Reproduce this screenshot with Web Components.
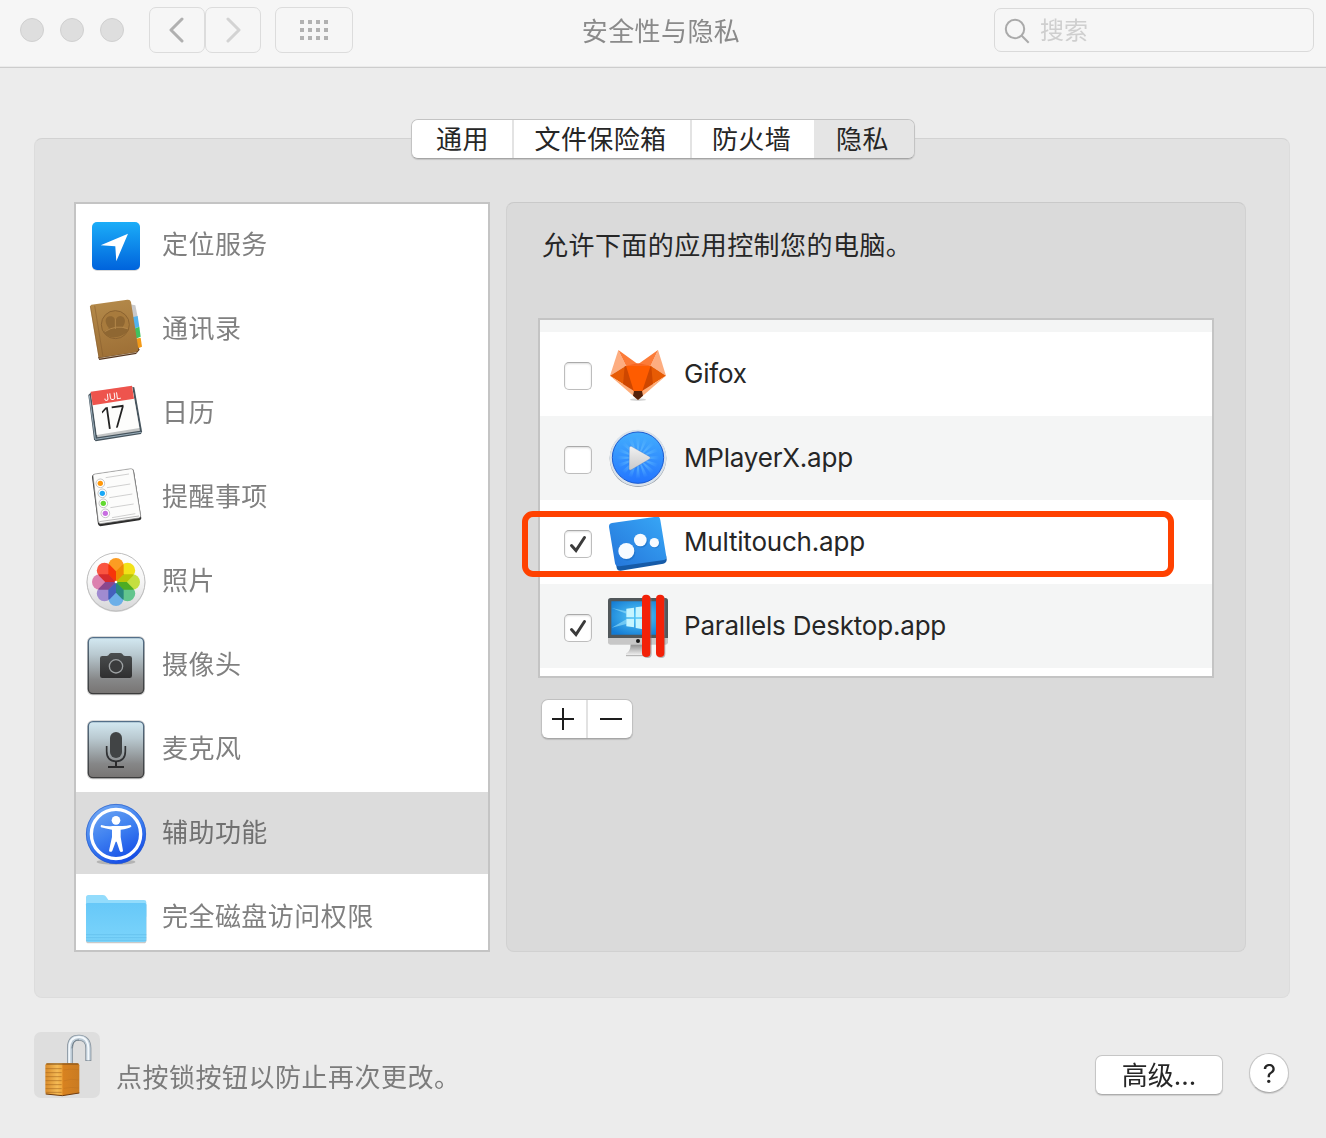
<!DOCTYPE html>
<html lang="zh-CN">
<head>
<meta charset="utf-8">
<title>安全性与隐私</title>
<style>
html,body{margin:0;padding:0}
body{width:1326px;height:1138px;overflow:hidden;background:#ececec;color:#262626;
font:26px/36px Inter,"Noto Sans CJK SC",sans-serif}
</style>
</head>
<body>
<prefs-window></prefs-window>
<script>
const S='scale(.33333)';
const at=(x,y,body)=>`<g transform="translate(${x},${y}) ${S}">${body}</g>`;
const glass=`<defs><linearGradient id="m" x1="0" y1="0" x2="0" y2="1"><stop offset="0" stop-color="#d3e9f2"/><stop offset=".3" stop-color="#b9c9d0"/><stop offset=".75" stop-color="#868788"/><stop offset="1" stop-color="#777473"/></linearGradient><linearGradient id="e" x1="0" y1="0" x2="0" y2="1"><stop offset="0" stop-color="#536f89"/><stop offset=".4" stop-color="#4c5760"/><stop offset="1" stop-color="#3c3c3c"/></linearGradient><linearGradient id="d" x1="0" y1="0" x2="0" y2="1"><stop offset="0" stop-color="#4b4e4f"/><stop offset="1" stop-color="#2f2f30"/></linearGradient></defs>`;
const plate=y=>`<rect x="51" y="${y-3}" width="174" height="177" rx="17" fill="#9a9a9a" opacity=".5"/><rect x="55" y="${y+1}" width="166" height="168" rx="14" fill="url(#m)" stroke="url(#e)" stroke-width="4"/>`;
const petals=['#fc9c22','#f2e218','#c5df3f','#63c58d','#6cafe8','#a08bd0','#dc81ae','#fa5540'];
const icons={
location:`<defs><linearGradient id="a" x1="0" y1="0" x2="0" y2="1"><stop offset="0" stop-color="#1badf8"/><stop offset="1" stop-color="#0063dc"/></linearGradient></defs><rect x="8" y="9" width="48" height="48" rx="5" fill="#000" opacity=".15"/><rect x="8" y="8" width="48" height="48" rx="5" fill="url(#a)"/><path d="M44 19.7 16.7 31.3 31.3 32.3 32.3 47.3Z" fill="#fff"/>`,
contacts:at(-14,-98,`<defs><linearGradient id="a" x1="0" y1="0" x2=".2" y2="1"><stop offset="0" stop-color="#b58b4b"/><stop offset="1" stop-color="#9f7137"/></linearGradient></defs>
<path d="M176 312 196 316 203 350 190 356Z" fill="#c9c9cb"/><path d="M187 352 203 348 208 380 192 386Z" fill="#52b3ee"/><path d="M192 386 208 380 212 410 197 416Z" fill="#40c25e"/><path d="M197 416 212 413 216 440 200 446Z" fill="#f39a18"/>
<path d="M84 472 88 480 198 462 209 449 203 440Z" fill="#51321c"/><path d="M88 475 200 457" stroke="#e8d7b8" stroke-width="2"/>
<path d="M64 314 172 299Q181 298 183 306L205 446Q206 454 198 456L86 473 60 319Z" fill="url(#a)"/><path d="M61 319 87 472M74 317 99 470" stroke="#80572a" stroke-width="2" opacity=".7"/>
<circle cx="136" cy="374" r="42" fill="#a87b3d" stroke="#8b6230" stroke-width="3"/><path d="M100 397C101 389 119 392 116 383C104 370 103 351 119 349C130 347 136 356 136 365C138 350 148 344 158 350C168 356 166 370 159 379C155 387 171 384 175 390C163 411 118 424 100 397Z" fill="#8f6732"/><path d="M104 395Q139 373 173 386M136 358V387" fill="none" stroke="#b3874a" stroke-width="3"/>`),
calendar:at(-14,-182,`<path d="M55 585 62 578 183 560 193 562 216 694 213 702 77 724 72 718Z" fill="#46545d"/><path d="M58 586 76 718 213 697" fill="none" stroke="#9cb0bd" stroke-width="3"/><path d="M62 577 186 558 210 692 82 712Z" fill="#c2c4c4"/><path d="M63 577 186 558 208 684 80 705Z" fill="#fdfdfc"/><path d="M62 575 186 557 192 596 68 616Z" fill="#ee544d"/>
<text transform="translate(103 603) rotate(-8)" font-family="Inter,sans-serif" font-size="28" fill="#fff" textLength="52" lengthAdjust="spacingAndGlyphs">JUL</text><text transform="translate(99 689) rotate(-8)" font-family="Inter,sans-serif" font-weight="300" font-size="90" fill="#222" textLength="75" lengthAdjust="spacingAndGlyphs">17</text>`),
reminders:at(-14,-16,`<path d="M66 80Q67 74 73 73L184 57Q191 57 192 64L214 205Q214 210 208 211L91 229Q86 228 84 222Z" fill="#2d2d2d"/><path d="M69 77Q69 73 75 72L183 56Q189 56 190 62L212 197Q212 203 206 204L92 221Q87 221 85 215Z" fill="#fcfcfb" stroke="#8b8b8b" stroke-width="2"/><path d="M88 215 207 198" stroke="#bbb" stroke-width="3"/>
<g stroke="#bababa" stroke-width="2"><path d="m107 83 70-11M111 113l70-11M118 143l69-11M126 203l70-12"/><path d="m121 173 70-11"/></g><g fill="#fff" stroke="#aaa" stroke-width="2"><circle cx="91" cy="100" r="13"/><circle cx="97" cy="130" r="13"/><circle cx="100" cy="160" r="13"/><circle cx="106" cy="190" r="13"/></g><circle cx="91" cy="100" r="8" fill="#ff9709"/><circle cx="97" cy="130" r="8" fill="#19a8f7"/><circle cx="100" cy="160" r="8" fill="#63d931"/><circle cx="106" cy="190" r="8" fill="#c86ee0"/>`),
photos:at(-14,-100,`<defs><linearGradient id="a" x1="0" y1="0" x2="0" y2="1"><stop offset="0" stop-color="#fff"/><stop offset=".5" stop-color="#f5f5f5"/><stop offset="1" stop-color="#d6d6d8"/></linearGradient></defs><circle cx="138" cy="398" r="88" fill="#aaa" opacity=".5"/><circle cx="138" cy="396" r="87" fill="url(#a)" stroke="#bfbfbf" stroke-width="3"/>
<g transform="translate(138 396)" style="isolation:isolate">${petals.map((c,i)=>`<path d="M0 0-23-23V-49A23 23 0 0 1 23-49V-23Z" fill="${c}" transform="rotate(${i*45})" style="mix-blend-mode:multiply"/>`).join('')}</g><circle cx="138" cy="396" r="4" fill="#fff"/>`),
camera:glass+at(-14,-184,plate(562)+`<path d="M90 625Q90 618 97 618H110Q115 618 118 612Q120 609 125 609H150Q155 609 157 612Q160 618 165 618H179Q186 618 186 625V677Q186 684 179 684H97Q90 684 90 677Z" fill="url(#d)"/><circle cx="138" cy="649" r="20" fill="#3a3b3c" stroke="#9ca0a2" stroke-width="4"/>`),
mic:glass+at(-14,-18,plate(64)+`<rect x="120" y="96" width="36" height="78" rx="18" fill="#414445"/><path d="M110 138V154C110 175 122 184 138 184S166 175 166 154V138" fill="none" stroke="#303234" stroke-width="5"/><path d="M138 184V200M114 201H162" stroke="#2a2a2b" stroke-width="6"/>`),
access:at(-14,-102,`<defs><linearGradient id="a" x1=".2" y1="0" x2=".7" y2="1"><stop offset="0" stop-color="#72a9f3"/><stop offset=".5" stop-color="#3d7ff0"/><stop offset="1" stop-color="#1248e6"/></linearGradient></defs><ellipse cx="138" cy="486" rx="58" ry="8" fill="#666" opacity=".35"/><circle cx="138" cy="402" r="90" fill="url(#a)"/><circle cx="138" cy="402" r="89" fill="none" stroke="#285bc6" stroke-width="2"/><circle cx="138" cy="402" r="74" fill="none" stroke="#fff" stroke-width="10"/><circle cx="138" cy="361" r="13" fill="#fff"/><path d="M94 375Q112 380 127 378H150Q168 379 181 375Q184 376 184 380Q174 386 152 389V411L159 452Q159 456 153 456Q151 456 149 452L140 425H137L127 452Q124 457 119 455Q116 453 118 448L126 411V389Q107 386 93 382Q90 378 94 375Z" fill="#fff"/>`),
folder:at(-14,-186,`<defs><linearGradient id="a" x1="0" y1="0" x2="0" y2="1"><stop offset="0" stop-color="#67c8f8"/><stop offset="1" stop-color="#7bd4fb"/></linearGradient></defs><rect x="48" y="608" width="181" height="122" rx="8" fill="#777" opacity=".4"/><path d="M48 593Q48 585 55 585H99Q106 585 109 591L115 600H222Q229 600 229 607V650H48Z" fill="#93dcfc"/><path d="M48 613Q48 609 52 609H224Q229 609 229 614V719Q229 726 222 726H55Q48 726 48 719Z" fill="url(#a)"/><path d="M48 704H229M48 713H229M48 721H229" stroke="#62bdea" stroke-width="2"/>`),
gifox:at(-86,-32,`<ellipse cx="354" cy="269" rx="24" ry="4" fill="#aaa" opacity=".5"/><path d="M295 120 270 197 318 167Z" fill="#fdad80"/><path d="M414 120 438 197 392 167Z" fill="#fdad80"/><path d="M295 120 354 163 392 167H318Z" fill="#fc7b37"/><path d="M414 120 354 163 318 167H392Z" fill="#fc7b37"/><path d="M318 167 354 160 392 167Z" fill="#f76420"/><path d="M270 197 318 167 346 246Z" fill="#e75b04"/><path d="M438 197 392 167 362 246Z" fill="#e75b04"/><path d="M314 169 309 226 346 248 325 167Z" fill="#ce4700"/><path d="M394 169 399 226 362 248 383 167Z" fill="#ce4700"/><path d="M270 197 342 243 354 270Z" fill="#ffad79"/><path d="M438 197 366 243 354 270Z" fill="#ffad79"/><path d="M318 167H392L366 245H342Z" fill="#fe5c00"/><path d="M342 243H366L369 257 354 270 339 257Z" fill="#562109"/>`),
mplayer:at(-86,-116,`<defs><linearGradient id="a" x1="0" y1="0" x2="0" y2="1"><stop offset="0" stop-color="#43aefd"/><stop offset="1" stop-color="#2375ff"/></linearGradient><linearGradient id="b" x1="0" y1="0" x2="0" y2="1"><stop offset="0" stop-color="#f2f2f2"/><stop offset="1" stop-color="#c8c8ca"/></linearGradient><radialGradient id="c" gradientUnits="userSpaceOnUse" cx="0" cy="0" r="64"><stop offset="0" stop-color="#62bcff"/><stop offset=".55" stop-color="#62bcff" stop-opacity=".8"/><stop offset="1" stop-color="#62bcff" stop-opacity="0"/></radialGradient></defs><circle cx="354" cy="446" r="85" fill="#8b949d"/><circle cx="354" cy="444" r="85" fill="#d9e2eb"/><circle cx="354" cy="443" r="77" fill="url(#a)" stroke="#1c5bd0" stroke-width="3"/><g transform="translate(354 443)" fill="url(#c)" opacity=".7">${Array.from({length:16},(_,i)=>`<path d="M0 0-6-63H6Z" transform="rotate(${i*22.5})"/>`).join('')}</g><path d="M328 413Q328 407 334 409L389 440Q393 444 389 447L333 480Q327 482 327 476Z" fill="url(#b)" stroke="#2869c4" stroke-width="1"/>`),
multitouch:at(-86,-10,`<defs><linearGradient id="a" x1="1" y1="0" x2="0" y2="1"><stop offset="0" stop-color="#38a8f7"/><stop offset="1" stop-color="#2474d9"/></linearGradient></defs><path d="M271 75 290 203Q292 213 302 212L430 191Q441 188 440 178L438 166Z" fill="#165ba8"/><path d="M276 69 408 50Q419 48 421 60L439 170Q440 178 432 180L298 199Q287 200 285 190L267 81Q266 71 276 69Z" fill="url(#a)"/><g fill="#1768bd" opacity=".5"><circle cx="322" cy="158" r="24"/><circle cx="364" cy="124" r="19"/><circle cx="405" cy="131" r="14"/></g><g fill="#f7fbff"><circle cx="319" cy="153" r="24"/><circle cx="361" cy="120" r="19"/><circle cx="403" cy="128" r="14"/></g>`),
parallels:at(-86,-94,`<defs><radialGradient id="a" cx=".5" cy=".45" r=".65"><stop offset="0" stop-color="#58ccfa"/><stop offset="1" stop-color="#137bd4"/></radialGradient><linearGradient id="b" x1="0" y1="0" x2="0" y2="1"><stop offset="0" stop-color="#8b8b8b"/><stop offset="1" stop-color="#f5f5f5"/></linearGradient></defs><path d="M332 432H378V461H390V467H318V460Q331 456 332 432Z" fill="url(#b)"/><path d="M318 467H390" stroke="#888" stroke-width="2"/><path d="M264 302Q264 294 272 294H436Q444 294 444 302V414H264Z" fill="#51575a"/><path d="M264 414H444V427Q444 434 437 434H271Q264 434 264 427Z" fill="#c7c7c7"/><path d="M274 304H434V404H274Z" fill="url(#a)"/><path d="M275 324 319 334V372L275 383 319 358V341Z" fill="#91ddfb" opacity=".65"/><path d="m319 326 23-3v29h-23zm28-4 30-4v34h-30zm-28 34h23v26l-23-3zm28 0h30v33l-30-5z" fill="#c5f5ff"/><circle cx="354" cy="423" r="6" fill="#171717"/><g fill="#777" opacity=".5"><rect x="370" y="288" width="25" height="186" rx="12"/><rect x="411" y="288" width="25" height="186" rx="12"/></g><rect x="366" y="284" width="25" height="187" rx="12" fill="#f32108"/><rect x="408" y="284" width="25" height="187" rx="12" fill="#f32108"/>`),
lock:at(-14,-52,`<defs><linearGradient id="a"><stop offset="0" stop-color="#d98b2b"/><stop offset=".35" stop-color="#f4ba55"/><stop offset=".48" stop-color="#efa73d"/><stop offset=".52" stop-color="#d88220"/><stop offset="1" stop-color="#c97b22"/></linearGradient></defs>
<path d="M150 251V204C150 181 160 173 177 173S205 184 205 204V243" fill="none" stroke="#7f8a94" stroke-width="18"/><path d="M150 251V204C150 181 160 173 177 173S205 184 205 204V241" fill="none" stroke="#bccad5" stroke-width="14"/><path d="M148 250V204C148 181 160 171 177 171S204 181 205 204V241" fill="none" stroke="#f3f8fc" stroke-width="6"/><path d="M156 205C158 187 164 180 177 180" fill="none" stroke="#6f7d89" stroke-width="3"/>
<path d="M76 255Q77 250 83 250H171Q178 250 178 256V339L127 347 80 343Q76 342 76 337Z" fill="url(#a)"/><path d="M79 252H175" stroke="#7a4b15" stroke-width="3"/><path d="M77 266H125M77 278H125M77 290H125M77 302H125M77 314H125M77 326H125M78 337H125" stroke="#a5651d" stroke-width="3" opacity=".6"/><path d="M77 342 127 347 178 339" fill="none" stroke="#6d3a0e" stroke-width="3"/><path d="M131 270Q150 265 177 269M131 303Q153 294 177 300M131 325Q153 320 177 324" fill="none" stroke="#b66d1d" stroke-width="1"/>`)
};
const define=(name,html)=>customElements.define(name,class extends HTMLElement{
 connectedCallback(){ if(this.shadowRoot) return; const r=this.attachShadow({mode:'open'}); r.innerHTML=typeof html==='function'?html(this):html; }
});
define('pref-icon',el=>{const n=el.getAttribute('name'),s=n==='lock'?66:64;
 return `<style>:host{display:block;flex:none;width:${s}px;height:${s}px}svg{display:block}</style><svg width="${s}" height="${s}" viewBox="0 0 ${s} ${s}">${icons[n]}</svg>`});
define('title-bar',`<style>
:host{display:grid;grid-template-columns:1fr auto 1fr;box-sizing:border-box;height:68px;background:#f6f6f6;border-bottom:1px solid #cdcdcd;box-shadow:inset 0 -1px #ebebeb;padding:7px 12px 0 20px}
.left{display:flex;align-items:center;height:46px}
i{box-sizing:border-box;width:24px;height:24px;border-radius:50%;background:#dedede;border:1px solid #d0d0d0;margin-right:16px}
b{box-sizing:border-box;width:56px;height:46px;border:1.5px solid #dcdcdc;border-radius:7px;display:grid;place-items:center}
i:nth-of-type(3){margin-right:25px}.all{width:78px;margin-left:14px}
.t{color:#8a8a8a;letter-spacing:.4px;height:46px;line-height:46px;padding-top:2px;margin:0 12px 0 0}
.s{justify-self:end;display:flex;align-items:center;box-sizing:border-box;width:320px;height:44px;margin-top:1px;border:1.5px solid #dadada;border-radius:7px;padding-left:8px;color:#cfcfcf;font-size:24px;gap:9px}
.s span{line-height:36px;padding-top:1px}svg{display:block}.s svg{margin-top:2px}
</style><div class="left"><i></i><i></i><i></i><b><svg width="16" height="26" fill="none" stroke="#b0b0b0" stroke-width="3" stroke-linecap="round" stroke-linejoin="round"><path d="M13 2 2 13 13 24"/></svg></b><b><svg width="16" height="26" fill="none" stroke="#d3d3d3" stroke-width="3" stroke-linecap="round" stroke-linejoin="round"><path d="M3 2 14 13 3 24"/></svg></b><b class="all"><svg width="28" height="20" fill="#b1b1b1"><path d="M0 0h4v4H0zm8 0h4v4H8zm8 0h4v4h-4zm8 0h4v4h-4zM0 8h4v4H0zm8 0h4v4H8zm8 0h4v4h-4zm8 0h4v4h-4zM0 16h4v4H0zm8 0h4v4H8zm8 0h4v4h-4zm8 0h4v4h-4z"/></svg></b></div><div class="t"><slot></slot></div><div class="s"><svg width="28" height="28" fill="none" stroke="#aaa" stroke-width="2"><circle cx="12" cy="12" r="9.2"/><path d="m18.5 18.5 7.2 7.2"/></svg><span>搜索</span></div>`);
define('tab-item',`<style>:host{display:block;box-sizing:border-box;width:var(--w);height:38px;line-height:40px;text-align:center;letter-spacing:.4px;background:#fff;border-right:2px solid #e3e3e3;padding-right:3px}:host([first]){padding:0 0 0 1px}:host([active]){background:#e5e5e5;border:0}:host([last-light]){border:0}</style><slot></slot>`);
define('tab-strip',`<style>:host{display:flex;align-self:center;overflow:hidden;border-radius:7px;border:1px solid #c3c3c3;border-bottom-color:#a5a5a5;box-shadow:0 1px 1px #0002;position:relative;z-index:1;margin-bottom:-21px;box-sizing:border-box;width:504px;height:40px}</style><slot></slot>`);
define('side-item',el=>`<style>:host{display:block;height:84px;flex:none;color:#808080}div{box-sizing:border-box;display:flex;align-items:center;gap:14px;height:84px;padding-left:8px}:host([selected]) div{background:linear-gradient(#dcdcdc,#dcdcdc) 0 0/100% 82px no-repeat;color:#707070}span{letter-spacing:.45px;padding-bottom:2px}</style><div><pref-icon name="${el.getAttribute('icon')}"></pref-icon><span><slot></slot></span></div>`);
define('side-list',`<style>:host{display:flex;flex-direction:column;box-sizing:border-box;flex:none;width:416px;height:750px;border:2px solid #c4c4c4;background:#fff;overflow:hidden}</style><slot></slot>`);
define('check-box',el=>`<style>:host{display:block;box-sizing:border-box;flex:none;width:28px;height:28px;background:#fff;border:1px solid #bdbdbd;border-top-color:#aaa;border-radius:5px;box-shadow:inset 0 1px 2px #0002;margin-top:4px}svg{display:block}</style>${el.hasAttribute('checked')?'<svg width="26" height="26" viewBox="0 0 26 26" fill="none" stroke="#3b3b3b" stroke-width="3" stroke-linecap="round"><path d="M6.5 14.5 11 19.5 19.5 6.5"/></svg>':''}`);
define('app-item',el=>`<style>:host{display:flex;box-sizing:border-box;align-items:center;gap:14px;height:84px;flex:none;padding-left:24px;background:#fff}:host([alt]){background:#f4f5f5}span{letter-spacing:-.2px}</style><check-box ${el.hasAttribute('checked')?'checked':''}></check-box><pref-icon name="${el.getAttribute('icon')}"></pref-icon><span><slot></slot></span>`);
define('app-list',`<style>:host{display:flex;flex-direction:column;box-sizing:border-box;height:360px;border:2px solid #c4c4c4;background:#fff;overflow:hidden}i{height:12px;background:#f4f5f5;flex:none}</style><i></i><slot></slot>`);
define('add-remove',`<style>:host{display:flex;box-sizing:border-box;width:92px;height:40px;background:#fff;border:1px solid #c0c0c0;border-bottom-color:#a6a6a6;border-radius:7px;box-shadow:0 1px 1px #0002}svg{display:block}</style><svg width="90" height="38" stroke="#1d1d1d" stroke-width="2"><path d="M45 0V38" stroke="#e2e2e2"/><path d="M10 19H32M21 8V30M58 19H80"/></svg>`);
define('app-pane',`<style>:host{display:flex;flex-direction:column;box-sizing:border-box;flex:1;height:750px;background:#dadada;border:1px solid #d1d1d1;border-top-color:#c9c9c9;border-radius:8px;padding:25px 31px 0;position:relative}
p{margin:0 0 54px 4px;letter-spacing:.45px;height:36px}add-remove{margin:21px 0 0 3px}.mark{position:absolute;left:15px;top:308px;width:640px;height:54px;border:6px solid #ff4100;border-radius:11px}</style>
<p>允许下面的应用控制您的电脑。</p><app-list><app-item icon="gifox">Gifox</app-item><app-item alt icon="mplayer">MPlayerX.app</app-item><app-item checked icon="multitouch">Multitouch.app</app-item><app-item alt checked icon="parallels">Parallels Desktop.app</app-item></app-list><add-remove></add-remove><div class="mark"></div>`);
define('group-panel',`<style>:host{display:flex;gap:16px;box-sizing:border-box;height:860px;background:#e2e2e2;border:1px solid #dcdcdc;border-top-color:#d2d2d2;border-radius:8px;padding:63px 43px 0 39px}</style><slot></slot>`);
define('push-button',`<style>:host{display:block;box-sizing:border-box;background:#fff;border:1px solid #c6c6c6;border-bottom-color:#adadad;box-shadow:0 1px 1px #0002;text-align:center;width:128px;height:40px;line-height:39px;border-radius:7px}:host([round]){width:40px;height:40px;border-radius:50%;line-height:39px;padding-left:1px}</style><slot></slot>`);
define('bottom-bar',`<style>:host{display:flex;margin-top:34px;align-items:flex-start}.l{background:#dedede;border-radius:7px;width:66px;height:66px}p{margin:28px auto 0 16px;color:#7b7b7b;letter-spacing:.5px}push-button{margin-top:23px}push-button[round]{margin:21px 1px 0 26px}</style><div class="l"><pref-icon name="lock"></pref-icon></div><p>点按锁按钮以防止再次更改。</p><push-button>高级...</push-button><push-button round>?</push-button>`);
define('prefs-window',`<style>:host{display:block}main{display:flex;flex-direction:column;padding:51px 36px 0 34px}tab-strip{left:1px}</style><title-bar>安全性与隐私</title-bar><main>
<tab-strip><tab-item first style="--w:102px">通用</tab-item><tab-item style="--w:178px">文件保险箱</tab-item><tab-item last-light style="--w:122px">防火墙</tab-item><tab-item active style="--w:100px">隐私</tab-item></tab-strip>
<group-panel><side-list><side-item icon="location">定位服务</side-item><side-item icon="contacts">通讯录</side-item><side-item icon="calendar">日历</side-item><side-item icon="reminders">提醒事项</side-item><side-item icon="photos">照片</side-item><side-item icon="camera">摄像头</side-item><side-item icon="mic">麦克风</side-item><side-item selected icon="access">辅助功能</side-item><side-item icon="folder">完全磁盘访问权限</side-item></side-list><app-pane></app-pane></group-panel>
<bottom-bar></bottom-bar></main>`);
</script>
</body>
</html>
